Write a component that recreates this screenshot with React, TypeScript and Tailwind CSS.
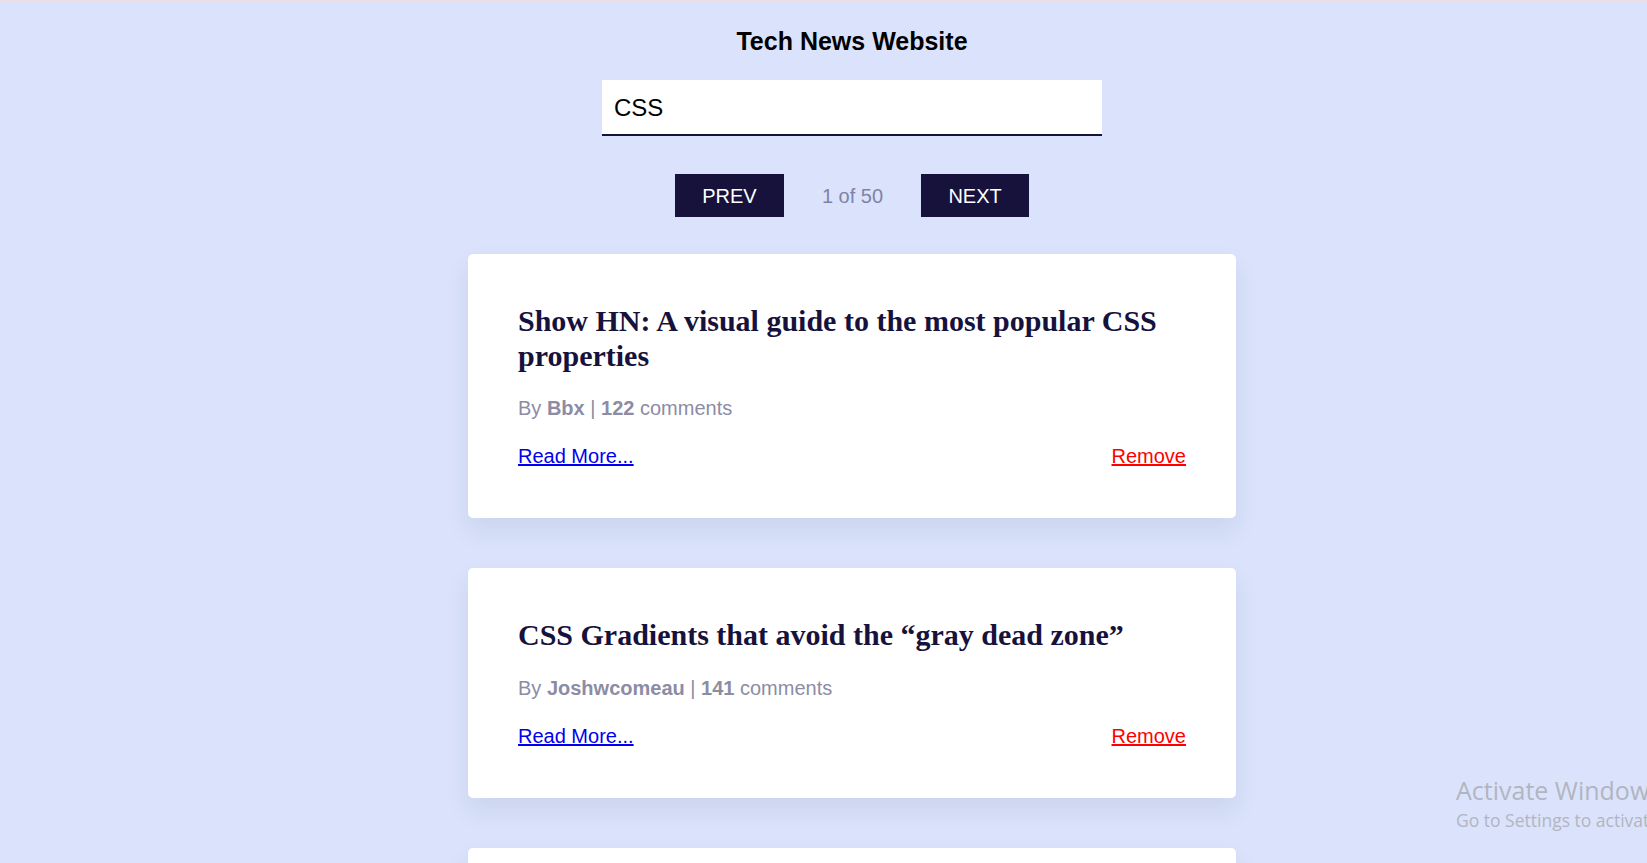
import React from "react";

const articles = [
  {
    title: "Show HN: A visual guide to the most popular CSS properties",
    author: "Bbx",
    comments: 122,
  },
  {
    title: "CSS Gradients that avoid the \u201cgray dead zone\u201d",
    author: "Joshwcomeau",
    comments: 141,
  },
  {
    title: "Modern CSS Solutions for Old CSS Problems",
    author: "Stephaniecodes",
    comments: 87,
  },
];

function Card({ a }: { a: (typeof articles)[number] }) {
  return (
    <div className="w-[768px] rounded-[5px] bg-white p-[50px] shadow-[0_12px_26px_rgba(20,30,80,0.08)]">
      <h2 className="font-['Liberation_Serif',serif] text-[30px] font-bold leading-[34.5px] text-[#16123c]">
        {a.title}
      </h2>
      <p className="mt-[24px] text-[20px] leading-[23px] text-[#8c8ca4]">
        By <span className="font-bold">{a.author}</span> |{" "}
        <span className="font-bold">{a.comments}</span> comments
      </p>
      <div className="mt-[25px] flex items-center justify-between text-[20px] leading-[23px]">
        <a href="#" className="text-[#0000ee] underline">
          Read More...
        </a>
        <a href="#" className="text-[#ff0000] underline">
          Remove
        </a>
      </div>
    </div>
  );
}

export default function App() {
  return (
    <div className="relative h-screen w-full overflow-hidden bg-[#dae3fb] font-['Liberation_Sans',Arial,sans-serif]">
      <div className="h-px bg-[#f0dae3]" />
      <div className="flex flex-col items-center pl-[57px]">
        <h1 className="mt-[26px] text-[25px] font-bold leading-[28px] text-black">
          Tech News Website
        </h1>
        <input
          type="text"
          defaultValue="CSS"
          className="mt-[25px] h-[56px] w-[500px] border-b-2 border-[#16123c] bg-white px-[12px] pt-[2px] text-[24px] text-black outline-none"
        />
        <div className="mt-[38px] flex items-center">
          <button className="h-[43px] w-[109px] bg-[#16123c] text-[20px] text-white">
            PREV
          </button>
          <span className="mx-[38px] text-[20px] text-[#7d83a6]">1 of 50</span>
          <button className="h-[43px] w-[108px] bg-[#16123c] text-[20px] text-white">
            NEXT
          </button>
        </div>
        <div className="mt-[37px] flex flex-col gap-[50px] pb-[50px]">
          {articles.map((a) => (
            <Card key={a.title} a={a} />
          ))}
        </div>
      </div>
      <div className="pointer-events-none absolute left-[1456px] top-[778px] whitespace-nowrap font-['Open_Sans',sans-serif] text-[#b2b5c1]">
        <div className="text-[25px] leading-none">Activate Windows</div>
        <div className="mt-[9px] text-[17.5px] leading-none">
          Go to Settings to activate Windows.
        </div>
      </div>
    </div>
  );
}
